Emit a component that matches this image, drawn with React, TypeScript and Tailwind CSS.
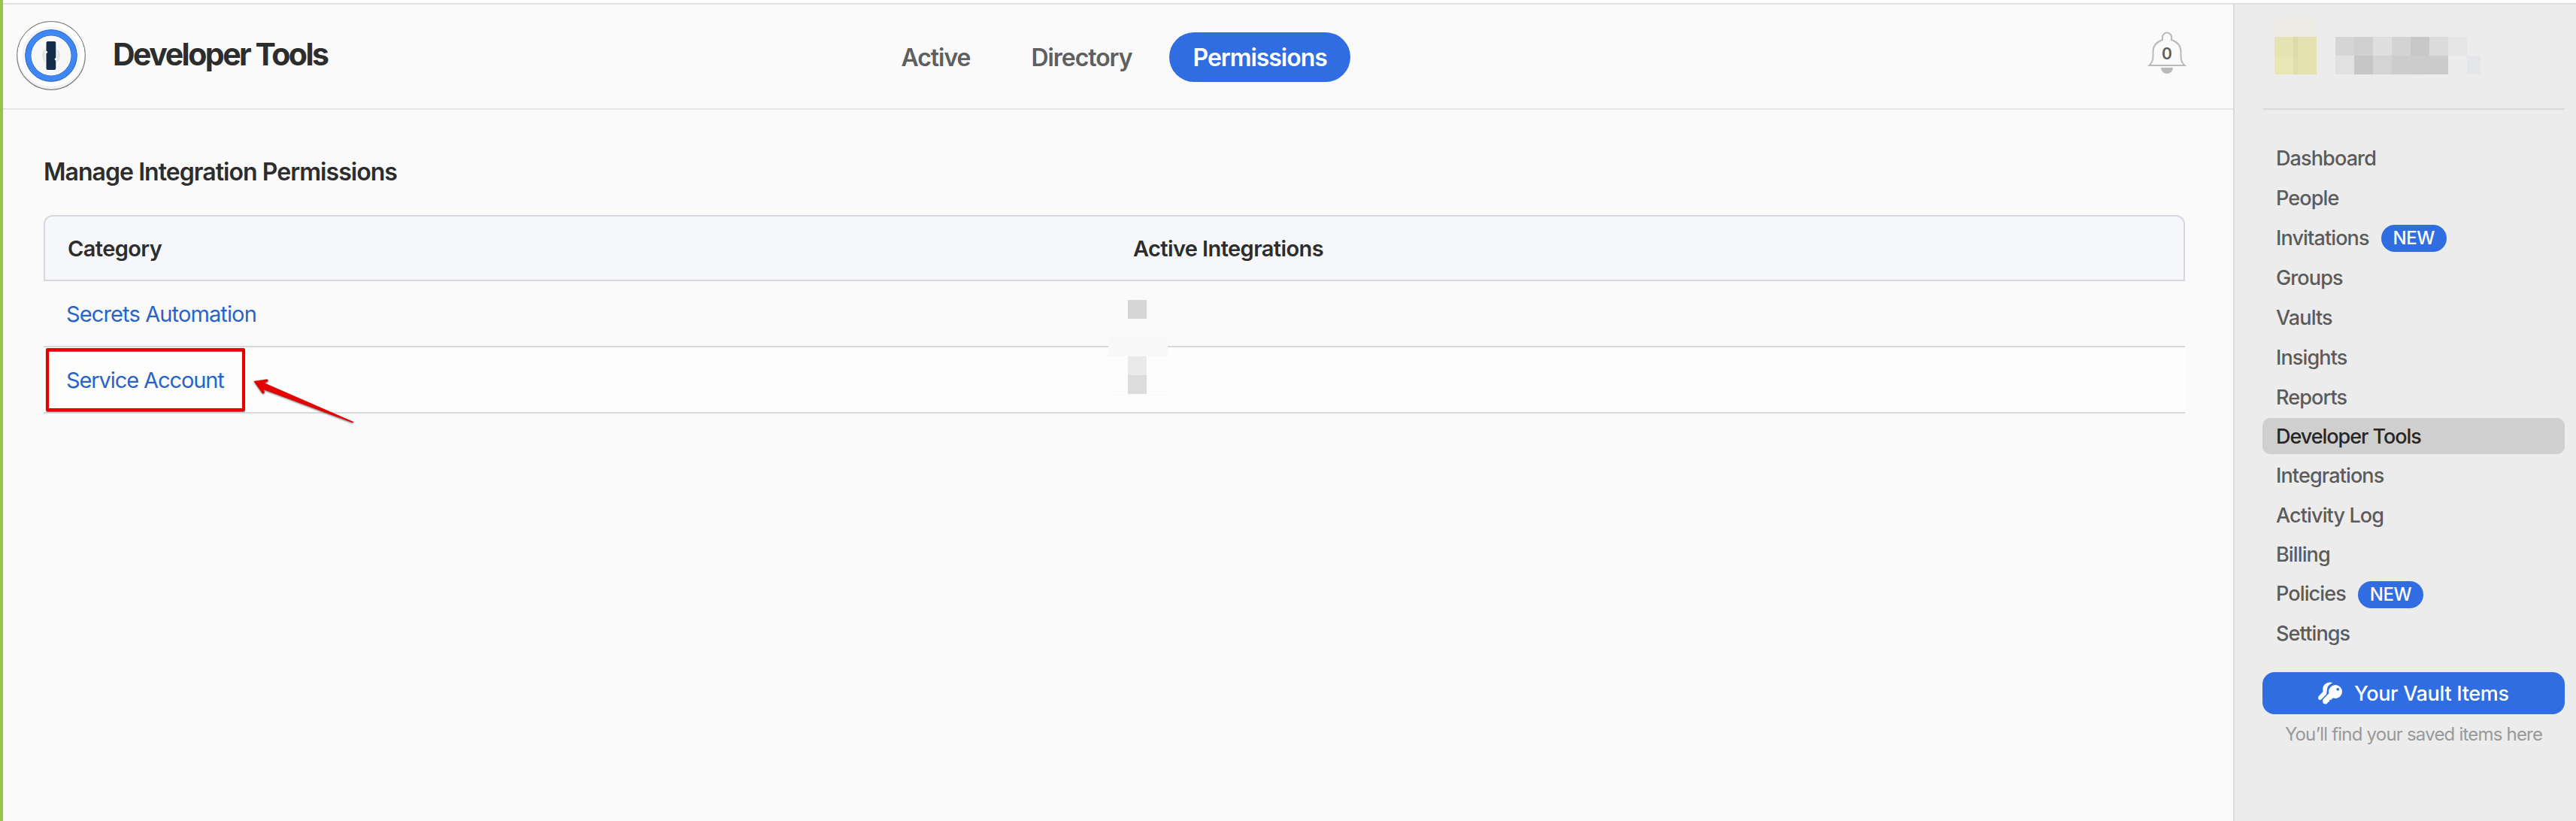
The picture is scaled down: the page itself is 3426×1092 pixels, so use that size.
import React, { useState } from 'react';
import clsx from 'clsx';

const tabs = ['Active', 'Directory', 'Permissions'];

const adminLinks = [
  { name: 'Dashboard' },
  { name: 'People' },
  { name: 'Invitations', isNew: true },
  { name: 'Groups' },
  { name: 'Vaults' },
  { name: 'Insights' },
  { name: 'Reports' },
];

const toolLinks = [
  { name: 'Developer Tools' },
  { name: 'Integrations' },
  { name: 'Activity Log' },
  { name: 'Billing' },
  { name: 'Policies', isNew: true },
  { name: 'Settings' },
];

function Logo() {
  return (
    <svg className="w-[92px] h-[92px]" viewBox="0 0 92 92" fill="none">
      <circle cx="46" cy="46" r="45.3" fill="#f1f1f1" stroke="#7c7c7c" strokeWidth="1.2" />
      <ellipse cx="46" cy="44" rx="44.4" ry="42.8" fill="#fff" />
      <circle cx="46" cy="46" r="38.5" fill="#f3f3f3" />
      <circle cx="46" cy="48" r="36.5" fill="#fff" />
      <circle cx="46" cy="46" r="30.5" fill="#f7f7f7" stroke="#3f87f5" strokeWidth="8" />
      <circle cx="46" cy="46" r="34.3" stroke="#2f68c4" strokeWidth="1" />
      <circle cx="46" cy="46" r="26.7" stroke="#2f68c4" strokeWidth="1" />
      <circle cx="46" cy="46" r="26" stroke="#fff" strokeWidth="1" />
      <circle cx="46" cy="46" r="11.2" fill="#e8e8e8" stroke="#d6d6d6" strokeWidth="1" />
      <rect x="38.2" y="25.5" width="15.2" height="41" rx="3" fill="#fff" />
      <rect x="39.5" y="27" width="12.8" height="38" rx="2" fill="#132c4c" />
      <circle cx="39.5" cy="41.3" r="1.6" fill="#fff" />
      <circle cx="52.3" cy="50.7" r="1.6" fill="#fff" />
    </svg>
  );
}

function Bell() {
  return (
    <div className="relative w-[52px] h-[58px]">
      <svg className="w-full h-full" viewBox="0 0 52 58" fill="none">
        <path
          d="M2.500 45c3.500-3 5-7 5-12.500V27c0-8 5-13.500 12.500-16V7.500a6 6 0 0 1 12 0V11c7.500 2.500 12.500 8 12.500 16v5.500c0 5.500 1.500 9.500 5 12.500z"
          stroke="#b9b9b9"
          strokeWidth="2"
        />
        <path d="M18 48h16a8 8 0 0 1-16 0z" fill="#b9b9b9" />
      </svg>
      <span className="absolute inset-x-0 top-[16px] text-center text-[21px] leading-[28px] font-semibold text-[#5c5c5c]">0</span>
    </div>
  );
}

function Keys() {
  return (
    <svg className="w-8 h-[30px]" viewBox="0 0 32 30" fill="none">
      {/* back key */}
      <path d="M19.500 1.200C13 -1 6.500 3 6.300 9.500L6.500 13 .8 19c-.8.9-.8 2.200-.5 3.600.4 1.500 2.500 2 3.700.9L11 16.500l1-7C12.500 5.500 15.500 2.800 19.500 1.200z" fill="#fff" />
      {/* front key */}
      <circle cx="23" cy="13" r="9" fill="#fff" />
      <path d="M14.500 15 7 22.800c-.8.9-.9 2-.8 3.400.1 2 1.400 3.300 3.300 3.300 2.500 0 3.300-1.200 3.500-2.800l1.800-.3.500-2.300 2-.4 3.500-3.200z" fill="#fff" />
      <circle cx="26.200" cy="9.800" r="1.900" fill="#2f6de1" />
    </svg>
  );
}

function NewBadge() {
  return (
    <span className="flex items-center justify-center w-[87px] h-9 rounded-full bg-[#2f6de1] text-white text-[24px] font-medium tracking-[-0.5px]">NEW</span>
  );
}

type NavLink = { name: string; isNew?: boolean };

function SideLink({ link, active }: { link: NavLink; active: boolean }) {
  return (
    <a
      className={clsx(
        'flex items-center gap-4 h-12 pl-[18px] pt-0.5 rounded-[10px] text-[27px] font-medium',
        active ? 'bg-[#cfcfcf] text-[#262626] tracking-[-1.05px]' : 'text-[#5b5b5b] tracking-[-0.87px]'
      )}
    >
      {link.name}
      {link.isNew && <NewBadge />}
    </a>
  );
}

// Pixelated account name
function AccountName() {
  return (
    <div className="flex pl-4 pt-[18px] h-[140px] border-b-2 border-[#dadada]">
      <div className="grid grid-cols-[25px_6px_25px] grid-rows-[25px_25px_25px] w-14">
        <i className="col-span-3 bg-[#ededE5]" />
        <i className="bg-[#e5e3b1]" />
        <i className="bg-[#dcdaa9]" />
        <i className="bg-[#e4e2ae]" />
        <i className="bg-[#e8e6b4]" />
        <i className="bg-[#dfddac]" />
        <i className="bg-[#e4e2ae]" />
      </div>
      <div className="grid grid-cols-[repeat(7,25px)_18px] grid-rows-[25px_25px] ml-[25px] mt-[25px]">
        <i className="bg-[#d5d5d5]" />
        <i className="bg-[#d0d0d0]" />
        <i className="bg-[#dfdfdf]" />
        <i className="bg-[#d3d3d3]" />
        <i className="bg-[#c8c8c8]" />
        <i className="bg-[#dbdbdb]" />
        <i className="bg-[#e6e6e6]" />
        <i />
        <i className="bg-[#e1e1e1]" />
        <i className="bg-[#c6c6c6]" />
        <i className="bg-[#d4d4d4]" />
        <i className="bg-[#cdcdcd]" />
        <i className="bg-[#cccccc]" />
        <i className="bg-[#cbcbcb]" />
        <i />
        <i className="bg-[#e5e6e9]" />
      </div>
    </div>
  );
}

export default function App() {
  const [tab, setTab] = useState('Permissions');

  return (
    <div className="flex flex-col w-[3426px] h-[1092px] overflow-hidden bg-white border-l-4 border-[#98c24a] font-['Inter','Liberation_Sans',sans-serif]">
      <div className="h-1.5 shrink-0 border-b-2 border-[#e0e0e0]" />
      <div className="flex flex-1">
        <main className="w-[2966px] bg-[#fafafa]">
          <header className="flex items-center h-[140px] border-b-2 border-[#e6e6e6] pl-[18px]">
            <div className="pb-0.5">
              <Logo />
            </div>
            <h1 className="w-[1017px] ml-[36px] pb-1 text-[41px] font-bold tracking-[-2.5px] text-[#2d2d2d]">Developer Tools</h1>
            <nav className="flex items-center gap-[18px] pt-0.5">
              {tabs.map((name) => (
                <button
                  key={name}
                  onClick={() => setTab(name)}
                  className={clsx(
                    'h-[66px] px-[31.5px] pt-px rounded-full text-[32px] font-semibold tracking-[-1.05px] whitespace-nowrap',
                    tab === name ? 'bg-[#2f6de1] text-white' : 'text-[#5f5f5f]'
                  )}
                >
                  {name}
                </button>
              ))}
            </nav>
            <div className="ml-auto mr-[62px] pb-2">
              <Bell />
            </div>
          </header>

          <section className="pl-[54px] pr-16 pt-[63px]">
            <h2 className="h-10 leading-10 text-[32px] font-semibold tracking-[-0.95px] text-[#2d2d2d]">Manage Integration Permissions</h2>

            <div className="mt-[37px] w-[2848px] text-[29px]">
              <div className="flex items-center h-[88px] pl-[30px] pt-px rounded-t-xl border-2 border-[#d7d8de] bg-[#f6f7fb] font-semibold tracking-[-0.6px] text-[#2d2d2d]">
                <span className="w-[1417px]">Category</span>
                <span>Active Integrations</span>
              </div>
              <div className="flex h-[88px] pl-[30px] border-b-2 border-[#d7d8de]">
                <a className="w-[1412px] leading-[88px] tracking-[-0.87px] text-[#2a63c8]">Secrets Automation</a>
                <i className="size-[25px] mt-[25px] bg-[#d6d6d6]" />
              </div>
              <div className="relative flex h-[88px] pl-[30px] border-b-2 border-[#d7d8de] bg-[#fdfdfd]">
                <a className="w-[1412px] leading-[88px] tracking-[-1.1px] text-[#2a63c8]">Service Account</a>
                <div className="mt-3">
                  <i className="block size-[25px] bg-[#eaeaea]" />
                  <i className="block size-[25px] bg-[#dcdcdc]" />
                </div>
                <i className="absolute left-[1416px] -top-[13px] w-[79px] h-[25px] bg-[#f8f8f8]" />
                <i className="absolute left-[1416px] top-[62px] w-[79px] h-0.5 bg-[#fafafa]" />
                {/* Callout around the link */}
                <div className="absolute left-[3px] top-px w-[265px] h-[84px] border-4 border-[#e60000] rounded-xs shadow-[0_1px_1px_rgba(0,0,0,0.6),inset_0_1px_1px_rgba(0,0,0,0.6)]" />
                <svg className="absolute left-[278px] top-[38px] w-[140px] h-[66px] drop-shadow-[0_1px_1px_rgba(0,0,0,0.6)]" viewBox="0 0 140 66">
                  <path d="M1.500 7 18.500 4.500c2.500-.3 3 2.500.5 3.200L16 9.500 134 61l-.5 1.500L14.500 18l1.200 3c.6 2-2 3.500-3.200 1.500z" fill="#e60000" />
                </svg>
              </div>
            </div>
          </section>
        </main>

        <aside className="flex-1 border-l-2 border-[#dadada] bg-[#ececec] pl-[37px]">
          <div className="w-[402px]">
            <AccountName />
            <div className="flex flex-col gap-[5px] pt-10">
              {adminLinks.map((link) => (
                <SideLink key={link.name} link={link} active={false} />
              ))}
            </div>
            <div className="flex flex-col gap-[4.4px] pt-1">
              {toolLinks.map((link) => (
                <SideLink key={link.name} link={link} active={link.name === 'Developer Tools'} />
              ))}
            </div>
            <button className="flex items-center w-full h-14 mt-7 pl-[74px] rounded-2xl bg-[#2f6de1] text-white text-[27px] font-medium tracking-[-0.3px]">
              <Keys />
              <span className="ml-4 pt-0.5">Your Vault Items</span>
            </button>
            <p className="mt-[9px] text-center text-[24px] leading-9 tracking-[-0.8px] text-[#999999]">You’ll find your saved items here</p>
          </div>
        </aside>
      </div>
    </div>
  );
}
